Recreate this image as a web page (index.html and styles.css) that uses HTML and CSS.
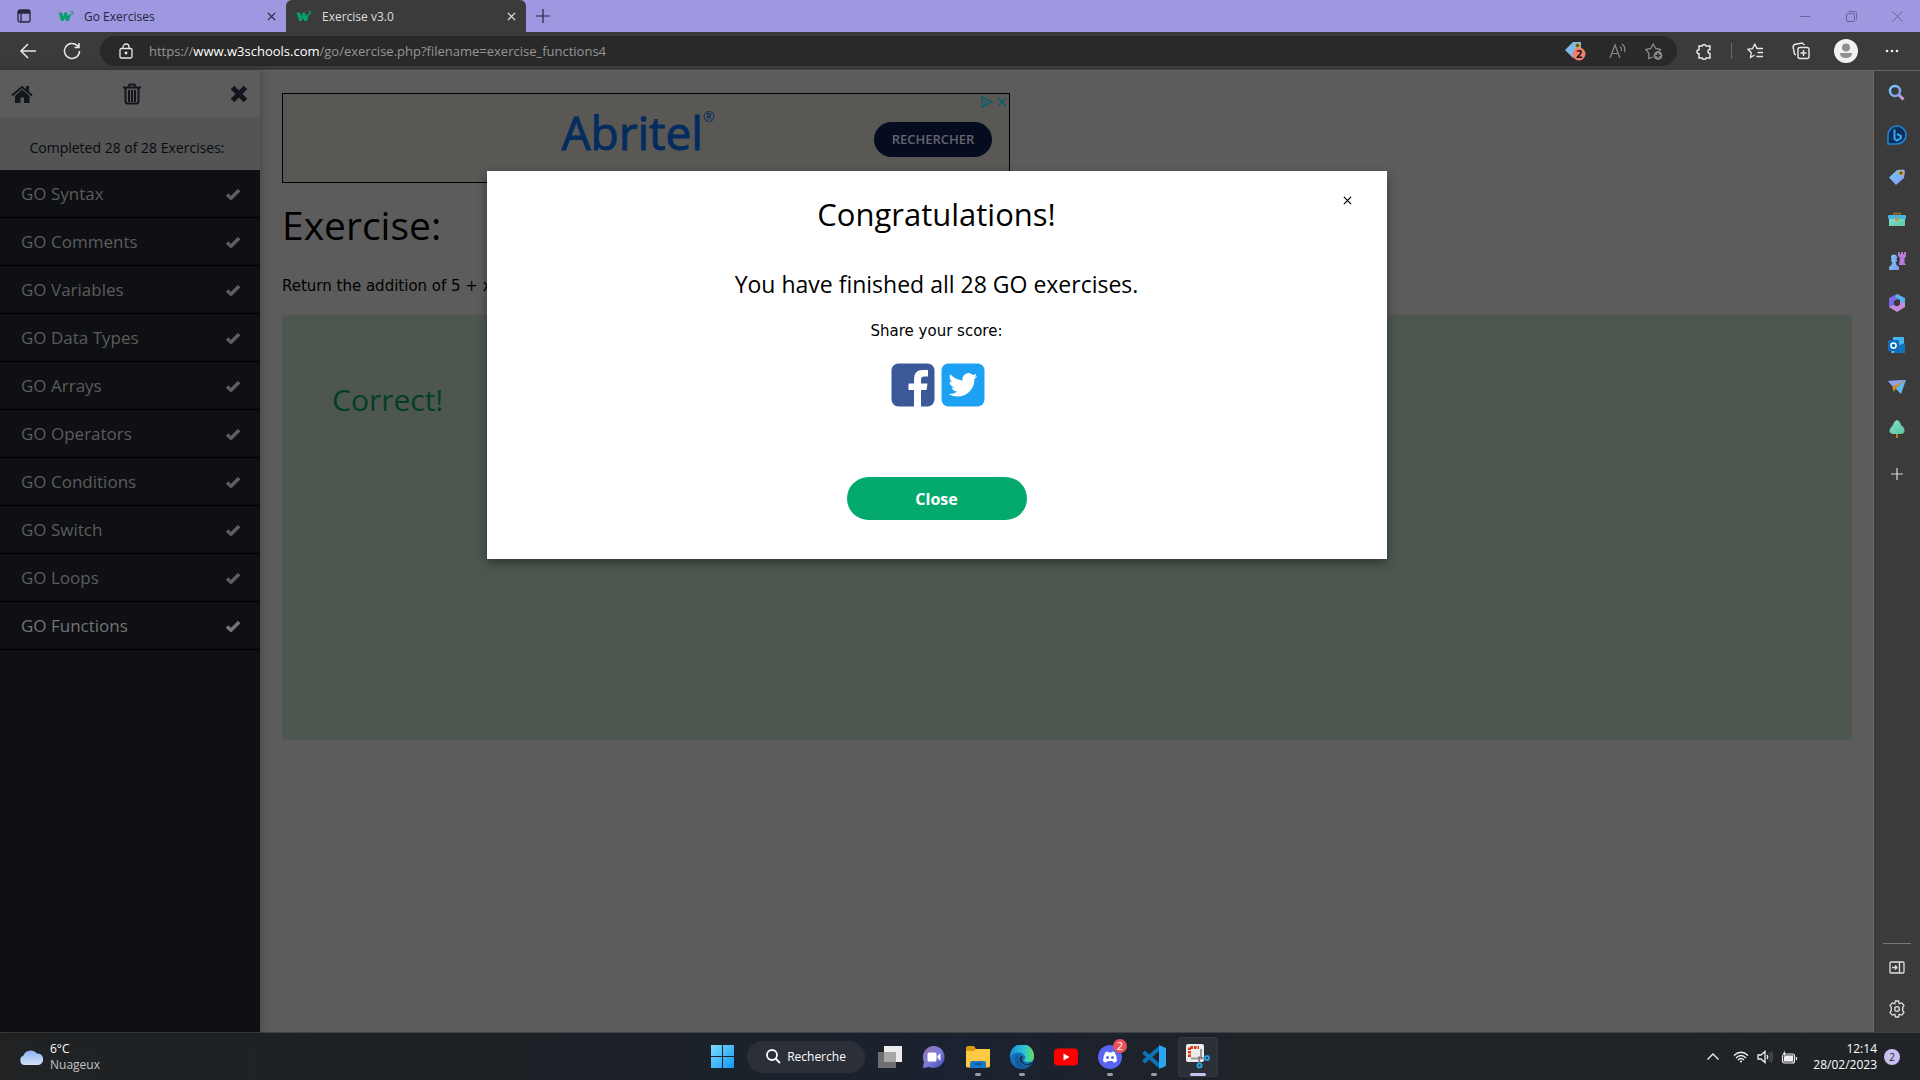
FILE: index.html
```html
<!DOCTYPE html>
<html lang="fr">
<head>
<meta charset="utf-8">
<title>Exercise v3.0</title>
<link rel="stylesheet" href="styles.css">
</head>
<body>
<svg class="defs" aria-hidden="true">
  <defs>
    <linearGradient id="g-blue" x1="0" y1="0" x2="1" y2="1"><stop offset="0" stop-color="#6fd0f7"/><stop offset="1" stop-color="#8a94f0"/></linearGradient>
    <linearGradient id="g-win" x1="0" y1="0" x2="1" y2="1"><stop offset="0" stop-color="#7fdcff"/><stop offset="1" stop-color="#1197f5"/></linearGradient>
    <linearGradient id="g-chat" x1="0" y1="0" x2="1" y2="1"><stop offset="0" stop-color="#9c6ba8"/><stop offset=".5" stop-color="#7a7fd8"/><stop offset="1" stop-color="#4b45b8"/></linearGradient>
    <linearGradient id="g-edge" x1="0" y1="0" x2="1" y2="0"><stop offset="0" stop-color="#1c8fd8"/><stop offset=".6" stop-color="#2cc3d4"/><stop offset="1" stop-color="#66e05a"/></linearGradient>
    <linearGradient id="g-green" x1="0" y1="0" x2="1" y2="1"><stop offset="0" stop-color="#7fe0d8"/><stop offset="1" stop-color="#5cc79a"/></linearGradient>
    <linearGradient id="g-cloud" x1="0" y1="0" x2="0" y2="1"><stop offset="0" stop-color="#8fb2f0"/><stop offset="1" stop-color="#d3e2fb"/></linearGradient>
    <symbol id="check" viewBox="0 0 16 12"><path d="M2 6.500 6 10.200 14.200 2" fill="none" stroke="currentColor" stroke-width="3.600"/></symbol>
    <symbol id="cross" viewBox="0 0 10 10"><path d="M1 1 9 9M9 1 1 9" fill="none" stroke="currentColor" stroke-width="1.400"/></symbol>
    <symbol id="w3" viewBox="0 0 16 16"><path d="M.5 4.500H4L5.200 8.500 6.500 4.500H9L10 8.500 10.800 6.500H13L10.800 13H8.200L7 10 5.500 13H3.200Z" fill="#07a06c"/><text x="12" y="7" class="w3-sup">3</text></symbol>
  </defs>
</svg>

<div class="screen">
  <header class="tabs">
    <button class="tab-menu" aria-label="Menu des onglets"><svg width="14" height="14" viewBox="0 0 14 14" fill="none" stroke="#26243a" stroke-width="1.300"><rect x="1" y="1" width="12" height="12" rx="2"/><path d="M1 4H13M4 4V13" /><path d="M1 2.500H13" stroke-width="2.500"/></svg></button>
    <div class="tab">
      <svg class="fav"><use href="#w3"/></svg><span class="tab-name">Go Exercises</span>
      <button class="tab-x" aria-label="Fermer Go Exercises"><svg width="9" height="9"><use href="#cross"/></svg></button>
    </div>
    <div class="tab tab-on">
      <svg class="fav"><use href="#w3"/></svg><span class="tab-name">Exercise v3.0</span>
      <button class="tab-x" aria-label="Fermer Exercise v3.0"><svg width="9" height="9"><use href="#cross"/></svg></button>
    </div>
    <button class="new-tab" aria-label="Nouvel onglet"><svg width="14" height="14" fill="none" stroke="#26243a" stroke-width="1.200"><path d="M7 0V14M0 7H14"/></svg></button>
    <div class="win-ctl">
      <button aria-label="Réduire"><svg width="10" height="10" fill="none" stroke="currentColor"><path d="M0 5.500H10"/></svg></button>
      <button aria-label="Restaurer"><svg width="11" height="11" fill="none" stroke="currentColor"><rect x=".5" y="2.500" width="8" height="8" rx="1.500"/><path d="M2.500.5H8.500A2 2 0 0 1 10.500 2.500V8.500"/></svg></button>
      <button aria-label="Fermer"><svg width="11" height="11" fill="none" stroke="currentColor"><path d="M.5.5 10.500 10.500M10.500.5.5 10.500"/></svg></button>
    </div>
  </header>

  <nav class="toolbar">
    <button class="tool" aria-label="Précédent"><svg width="18" height="16" fill="none" stroke="#e8e8e8" stroke-width="1.500"><path d="M17 8H2M9 1 2 8 9 15"/></svg></button>
    <button class="tool" aria-label="Actualiser"><svg width="18" height="18" fill="none" stroke="#e8e8e8" stroke-width="1.500"><path d="M16.500 9A7.500 7.500 0 1 1 14 3.400L16 5.200M16 1V5.500H11.500"/></svg></button>
    <div class="address">
      <svg width="14" height="16" fill="none" stroke="#e8e8e8" stroke-width="1.300"><rect x="1" y="5.500" width="12" height="9.500" rx="1.500"/><path d="M4 5.500V4A3 3 0 0 1 10 4V5.500"/><circle cx="7" cy="10" r=".8" fill="#e8e8e8"/></svg>
      <div class="url">https://<b>www.w3schools.com</b>/go/exercise.php?filename=exercise_functions4</div>
      <button class="tool in-tag" aria-label="Achats"><svg width="22" height="20"><path d="M1 9 9 1 17 1V10L9 17Z" fill="#7cb9ec"/><circle cx="13.500" cy="4.500" r="2" fill="#5b4a10" stroke="#d9a520"/><circle cx="15" cy="13" r="6.500" fill="#f08070"/><text x="12" y="17" class="tag-num">2</text></svg></button>
      <button class="tool in-read" aria-label="Lecture à voix haute"><svg width="18" height="16" fill="none" stroke="#8b8b8b" stroke-width="1.200"><path d="M1 15 6 2 11 15M3 10.500H9M11 3.500Q13 5 12.500 8M13 1Q17 4 15.500 9"/></svg></button>
      <button class="tool in-star" aria-label="Ajouter aux favoris"><svg width="18" height="17" fill="none" stroke="#8b8b8b" stroke-width="1.300"><path d="M8 14 3.500 15.500 4 10.500 .8 6.500 5.700 5.500 8.200 1.200 10.700 5.500 15.500 6.500 14 8.300"/><circle cx="13" cy="12.500" r="4.400" fill="#8b8b8b" stroke="none"/><path d="M13 10V15M10.500 12.500H15.500" stroke="#292929"/></svg></button>
    </div>
    <button class="tool ext" aria-label="Extensions"><svg width="17" height="17" fill="none" stroke="#e8e8e8" stroke-width="1.500"><path d="M3 3H6.200A2 2 0 0 1 10 3H14V6.500A2 2 0 0 0 14 10.500V15H10A2 2 0 0 1 6.200 15H3V10.800A2 2 0 0 1 3 6.800Z"/></svg></button>
    <span class="split"></span>
    <button class="tool fav-btn" aria-label="Favoris"><svg width="18" height="16" fill="none" stroke="#e8e8e8" stroke-width="1.300"><path d="M7.500 12 3.500 14.500 4.300 9.800 1 6.300 5.500 5.600 7.800 1.200 10 5.500H16M10.500 9.500H16M9.500 13.500H16"/></svg></button>
    <button class="tool coll" aria-label="Collections"><svg width="18" height="18" fill="none" stroke="#e8e8e8" stroke-width="1.400"><rect x="6" y="5.500" width="11" height="11" rx="2"/><path d="M11.500 8V14M8.500 11H14.500M4 13 2.500 12 1 4.500 2.500 2.500 10 1 12.500 3"/></svg></button>
    <button class="tool user" aria-label="Profil"><svg width="24" height="24"><circle cx="12" cy="12" r="12" fill="#f2f2f2"/><circle cx="12" cy="8.500" r="4" fill="#8f8f8f"/><path d="M6 14H18Q18 19 12 19T6 14Z" fill="#8f8f8f"/></svg></button>
    <button class="tool" aria-label="Paramètres et plus"><svg width="14" height="4" fill="#f0f0f0"><circle cx="2" cy="2" r="1.300"/><circle cx="7" cy="2" r="1.300"/><circle cx="12" cy="2" r="1.300"/></svg></button>
  </nav>

  <div class="body">
    <div class="page">
      <aside class="menu">
        <div class="menu-top">
          <button aria-label="Accueil"><svg width="22" height="19" fill="#14161d"><path d="M11 4.500 18.500 11V18H13V12.500H9.500V18H4V11Z"/><path d="M1 10.500 11 2 21 10.500" fill="none" stroke="#14161d" stroke-width="2"/><path d="M15 1H18V7L15 4.500Z"/></svg></button>
          <button aria-label="Supprimer"><svg width="20" height="22" fill="none" stroke="#14161d" stroke-width="2"><path d="M1 4.500H19M6.500 4 7.500 1.500H12.500L13.500 4M3.500 5V19A2 2 0 0 0 5.500 20.500H14.500A2 2 0 0 0 16.500 19V5M7 7V19M10 7V19M13 7V19"/></svg></button>
          <button aria-label="Fermer le menu"><svg width="18" height="18" fill="none" stroke="#14161d" stroke-width="5"><path d="M2.500 2.500 15.500 15.500M15.500 2.500 2.500 15.500"/></svg></button>
        </div>
        <div class="done">Completed 28 of 28 Exercises:</div>
        <a class="item" href="#">GO Syntax<svg><use href="#check"/></svg></a>
        <a class="item" href="#">GO Comments<svg><use href="#check"/></svg></a>
        <a class="item" href="#">GO Variables<svg><use href="#check"/></svg></a>
        <a class="item" href="#">GO Data Types<svg><use href="#check"/></svg></a>
        <a class="item" href="#">GO Arrays<svg><use href="#check"/></svg></a>
        <a class="item" href="#">GO Operators<svg><use href="#check"/></svg></a>
        <a class="item" href="#">GO Conditions<svg><use href="#check"/></svg></a>
        <a class="item" href="#">GO Switch<svg><use href="#check"/></svg></a>
        <a class="item" href="#">GO Loops<svg><use href="#check"/></svg></a>
        <a class="item item-on" href="#">GO Functions<svg><use href="#check"/></svg></a>
      </aside>
      <main class="main">
        <div class="ad">
          <div class="brand">Abritel<sup>®</sup></div>
          <button class="search-ad">RECHERCHER</button>
          <div class="ad-marks"><svg width="12" height="12" fill="none" stroke="#07606b" stroke-width="1.400"><path d="M1 1 11 6 1 11ZM4.500 5V9"/></svg><svg width="10" height="10" color="#07606b"><use href="#cross"/></svg></div>
        </div>
        <h1>Exercise:</h1>
        <p class="task">Return the addition of 5 + x</p>
        <div class="result"><h2>Correct!</h2></div>
      </main>
      <section class="modal" role="dialog" aria-label="Congratulations!">
        <button class="modal-x" aria-label="Fermer la fenêtre"><svg width="9" height="9"><use href="#cross"/></svg></button>
        <h2>Congratulations!</h2>
        <h3>You have finished all 28 GO exercises.</h3>
        <p>Share your score:</p>
        <div class="share">
          <a href="#" aria-label="Facebook"><svg width="44" height="44"><rect x=".5" y=".5" width="43" height="43" rx="7" fill="#3b5998"/><path d="M23 44V27H17.500V20.500H23V16Q23 7 31.500 7H37V13.500H33Q30 13.500 30 16.500V20.500H36.500L35.500 27H30V44Z" fill="#fff"/></svg></a>
          <a href="#" aria-label="Twitter"><svg width="44" height="44"><rect x=".5" y=".5" width="43" height="43" rx="7" fill="#1da1f2"/><path transform="translate(7.500 7.500) scale(1.200)" d="M23.950 4.570a10 10 0 0 1-2.820.770 4.960 4.960 0 0 0 2.160-2.720c-.95.550-2 .950-3.130 1.180a4.920 4.920 0 0 0-8.380 4.480C7.690 8.090 4.070 6.130 1.640 3.160a4.820 4.820 0 0 0-.67 2.480c0 1.710.870 3.210 2.190 4.100a4.900 4.900 0 0 1-2.230-.62v.06a4.920 4.920 0 0 0 3.950 4.830 5 5 0 0 1-2.210.080 4.940 4.940 0 0 0 4.600 3.420A9.870 9.870 0 0 1 0 19.540a13.990 13.990 0 0 0 7.560 2.210c9.050 0 14-7.500 14-13.980 0-.21 0-.42-.02-.63a9.940 9.940 0 0 0 2.410-2.570z" fill="#fff"/></svg></a>
        </div>
        <button class="close">Close</button>
      </section>
    </div>
    <aside class="side">
      <button aria-label="Rechercher"><svg width="18" height="18" fill="none"><circle cx="7" cy="7" r="5" stroke="url(#g-blue)" stroke-width="2.500"/><path d="M11 11 15.500 15.500" stroke="#c79ae0" stroke-width="3"/></svg></button>
      <button aria-label="Bing"><svg width="20" height="20"><path d="M10 1A9 9 0 1 1 10 19H1V10A9 9 0 0 1 10 1Z" fill="#0b2f57" stroke="#1f86dc" stroke-width="1.500"/><path d="M7.500 4.500V14L10 15.500 14 13V11L10 9" fill="none" stroke="#35a8f5" stroke-width="2"/></svg></button>
      <button aria-label="Achats"><svg width="18" height="18"><path d="M1 9.500 9 2 15.500 1.500 17 3 16 10 8 17Z" fill="url(#g-blue)"/><circle cx="13" cy="5" r="1.800" fill="#3b3b3b" stroke="#e09a12" stroke-width="1.300"/></svg></button>
      <button aria-label="Outils"><svg width="18" height="14"><path d="M6 4V1.500H12V4" fill="none" stroke="#a4741a" stroke-width="1.500"/><rect y="3" width="18" height="4" rx="1" fill="#48b6dc"/><rect x="1" y="7" width="16" height="7" fill="url(#g-green)"/><circle cx="9" cy="7.500" r="1.800" fill="#d19a1a"/></svg></button>
      <button aria-label="Jeux"><svg width="18" height="18"><path d="M10 0H11.800V2H13V0H15V2H16.200V0H18V5L16.500 6V11L18 13H11L12 6 10 4Z" fill="#b57bdc"/><circle cx="6" cy="5.500" r="3" fill="url(#g-blue)"/><path d="M3 8H9V9.500H7.500L8.500 13 11 15V18H1V15L3.500 13 4.500 9.500H3Z" fill="url(#g-blue)"/></svg></button>
      <button aria-label="Microsoft 365"><svg width="18" height="18"><path d="M9 0 1 4V13L6 15V7L11 4.500V1Z" fill="#7a6ae0"/><path d="M9 0 17 4V11L12 9V6L7 3Z" fill="#55b3f0"/><path d="M17 9V13L9 18 1 13 6 11 9 12.500 12 10.500V8Z" fill="#c58ae0"/></svg></button>
      <button aria-label="Outlook"><svg width="18" height="16"><path d="M5 0H16V16H3V4H5Z" fill="#42b4ee"/><path d="M9 9 17 6V16H6Z" fill="#1672b8"/><rect y="3" width="11" height="11" rx="1" fill="#0f6cbd"/><circle cx="5.500" cy="8.500" r="2.600" fill="none" stroke="#fff" stroke-width="1.500"/></svg></button>
      <button aria-label="Drop"><svg width="18" height="14"><path d="M0 1 18 0 13 14 8 9Z" fill="#62b7f2"/><path d="M0 1 18 0 5 7Z" fill="#8fa0f0"/><path d="M18 0 4 7 6 12 8 8Z" fill="#c98c1c"/></svg></button>
      <button aria-label="Arbre"><svg width="16" height="18"><rect x="7" y="11" width="2" height="7" fill="#b87a1c"/><path d="M8 0Q11 1 12 5 16 8 15.500 11T12 14H4Q0 13 .5 10.500T4 5Q5 1 8 0Z" fill="url(#g-green)"/></svg></button>
      <button class="side-add" aria-label="Personnaliser"><svg width="12" height="12" fill="none" stroke="#d8d8d8" stroke-width="1.200"><path d="M6 0V12M0 6H12"/></svg></button>
      <span class="side-line"></span>
      <button aria-label="Masquer la barre"><svg width="16" height="13" fill="none" stroke="#e0e0e0" stroke-width="1.300"><rect x="1" y="1" width="14" height="11" rx="1"/><path d="M10.500 1V12M3 6.500H8M6 4.500 8 6.500 6 8.500"/></svg></button>
      <button aria-label="Paramètres"><svg width="18" height="18" fill="none" stroke="#e0e0e0" stroke-width="1.300"><path d="M7.500 1H10.500L11.200 3.600 13.800 2.900 16 5.500 14.700 7.500V10.500L16 12.500 13.800 15.100 11.200 14.400 10.500 17H7.500L6.800 14.400 4.200 15.100 2 12.500 3.300 10.500V7.500L2 5.500 4.200 2.900 6.800 3.600Z"/><circle cx="9" cy="9" r="2.300"/></svg></button>
    </aside>
  </div>

  <footer class="taskbar">
    <div class="weather">
      <svg width="24" height="16"><path d="M5 16A5 5 0 0 1 4.500 6.500 7.500 6.500 0 0 1 18 4.500 5.500 5.500 0 0 1 19 16Z" fill="url(#g-cloud)"/></svg>
      <div><div>6°C</div><div class="sky">Nuageux</div></div>
    </div>
    <div class="apps">
      <button class="app" aria-label="Démarrer"><svg width="23" height="23" fill="url(#g-win)"><path d="M0 0H11V11H0ZM12 0H23V11H12ZM0 12H11V23H0ZM12 12H23V23H12Z"/></svg></button>
      <button class="find"><svg width="15" height="15" fill="none" stroke="#fff" stroke-width="1.800"><circle cx="6" cy="6" r="5"/><path d="M9.500 9.500 14 14"/></svg>Recherche</button>
      <button class="app" aria-label="Vue des tâches"><svg width="24" height="22"><rect x="6" width="18" height="16" fill="#ececec"/><rect y="6" width="18" height="16" fill="#6f6f6f"/><rect x="6" y="6" width="12" height="10" fill="#a8a8a8"/></svg></button>
      <button class="app" aria-label="Conversation"><svg width="24" height="24"><path d="M12 1A11 11 0 1 1 7 22L1 23 2 17A11 11 0 0 1 12 1Z" fill="url(#g-chat)"/><rect x="5.500" y="7.500" width="9" height="9" rx="1.500" fill="#fff"/><path d="M15.500 11 18.500 8V16L15.500 13Z" fill="#fff"/></svg></button>
      <button class="app run" aria-label="Explorateur"><svg width="24" height="22"><path d="M0 2Q0 0 2 0H8L10 3V8H0Z" fill="#d89b10"/><path d="M0 5H8L10 3H24V20Q24 21.500 22 21.500H2Q0 21.500 0 20Z" fill="#fdca44"/><path d="M4 22V17Q4 15 6 15H18Q20 15 20 17V22Z" fill="#1877c9"/><path d="M8 18H16" stroke="#0d5295" stroke-width="1.500"/></svg></button>
      <button class="app run" aria-label="Edge"><svg width="24" height="24"><circle cx="12" cy="12" r="12" fill="#1170b8"/><path d="M0 11A12 12 0 0 1 24 11Q24 17 18 17 14 17 14 15 16 13 14.500 10.500 12 7 7 7.500 2 8 0 13Z" fill="url(#g-edge)"/><path d="M9 10Q7 14 10 18T21 19.500Q18 24 12 24 5 22 5 16T9 10Z" fill="#135aa0"/><path d="M13 12Q10 14 13 17.500T23 17L21 19.500Q14 21 11 17.500T11 11Z" fill="#1b2430"/></svg></button>
      <button class="app" aria-label="YouTube"><svg width="24" height="18"><rect y=".5" width="24" height="17" rx="4" fill="#f00"/><path d="M9.500 5.500 15.500 9 9.500 12.500Z" fill="#fff"/></svg></button>
      <button class="app run" aria-label="Discord"><svg width="24" height="24"><circle cx="12" cy="12" r="12" fill="#5865f2"/><path d="M7.500 7 10 6.500 10.500 7.500H13.500L14 6.500 16.500 7Q19 11 19 16 17.500 17.500 15.500 17.500L14.500 16H9.500L8.500 17.500Q6.500 17.500 5 16 5 11 7.500 7Z" fill="#fff"/><circle cx="9.500" cy="12.500" r="1.500" fill="#5865f2"/><circle cx="14.500" cy="12.500" r="1.500" fill="#5865f2"/></svg><span class="badge">2</span></button>
      <button class="app run" aria-label="Visual Studio Code"><svg width="24" height="24" fill="none"><path d="M17.500 3 1.500 17M17.500 21 1.500 7" stroke="#0f72b8" stroke-width="4"/><path d="M17 0 24 3V21L17 24Z" fill="#2aa6f2"/></svg></button>
      <button class="app run on" aria-label="Outil Capture"><svg width="24" height="25"><rect width="18" height="18" rx="2" fill="#ececec"/><path d="M3.500 13V3.500H13" fill="none" stroke="#d83b12" stroke-width="3" stroke-dasharray="2.500 1"/><path d="M5 14.500H15V5" fill="none" stroke="#9a9a9a" stroke-width="2"/><path d="M12 13 19 14.500M13 13 13.500 19" stroke="#777" stroke-width="1.500"/><g fill="none" stroke="#2b9be0" stroke-width="2"><circle cx="21" cy="14" r="2"/><circle cx="13.500" cy="21.500" r="2"/></g></svg></button>
    </div>
    <div class="tray">
      <svg width="12" height="7" fill="none" stroke="#f0f0f0" stroke-width="1.300"><path d="M.5 6.500 6 1 11.500 6.500"/></svg>
      <svg class="wifi" width="16" height="12" fill="none" stroke="#f0f0f0" stroke-width="1.300"><path d="M1 4.500Q8-2 15 4.500M3 7Q8 2 13 7M5 9Q8 6 11 9"/><circle cx="8" cy="10.500" r="1" fill="#f0f0f0" stroke="none"/></svg>
      <svg class="vol" width="16" height="14" fill="none" stroke="#f0f0f0" stroke-width="1.300"><path d="M1 5H4L8 1.500V12.500L4 9H1ZM10 5Q11.500 7 10 9"/><path d="M12 3Q14.500 7 12 11M14 1.500Q17 7 14 12.500" stroke="#555"/></svg>
      <svg class="bat" width="17" height="14" fill="none" stroke="#f0f0f0" stroke-width="1.200"><rect x="1.500" y="4" width="12" height="9" rx="2"/><rect x="3.500" y="6" width="8" height="5" fill="#f0f0f0"/><path d="M15.500 7V10"/><path d="M4 0 1 5H3L2 8 6 3H4Z" fill="#f0f0f0" stroke="#202427" stroke-width=".5"/></svg>
      <div class="clock"><div>12:14</div><div>28/02/2023</div></div>
      <span class="count">2</span>
    </div>
  </footer>
</div>
</body>
</html>
```
FILE: styles.css
```css
* { box-sizing: border-box; }
body { margin: 0; font-family: "Open Sans", "Noto Sans", sans-serif; color: #000; }
button { border: 0; padding: 0; background: none; font: inherit; color: inherit; display: flex; align-items: center; justify-content: center; }
a { color: inherit; text-decoration: none; }
h1, h2, h3, p { margin: 0; font-weight: 400; }
svg { display: block; flex: none; }
.defs { position: absolute; width: 0; height: 0; }
.screen { min-height: 100vh; display: flex; flex-direction: column; overflow: hidden; }

/* tab strip */
.tabs { height: 32px; display: flex; background: #9d98e0; color: #26243a; font-size: 12px; }
.tab-menu { width: 48px; }
.tab { width: 238px; display: flex; align-items: center; padding: 0 10px; }
.tab-on { width: 240px; background: #3b3b3b; color: #dedede; border-radius: 6px 6px 0 0; }
.fav { width: 16px; height: 16px; }
.w3-sup { font: 700 6px "Open Sans", sans-serif; fill: #07a06c; }
.tab-name { flex: 1; padding-left: 10px; }
.new-tab { width: 34px; }
.win-ctl { margin-left: auto; display: flex; color: #67639a; }
.win-ctl button { width: 46px; }

/* address bar */
.toolbar { height: 39px; display: flex; align-items: center; background: #3b3b3b; border-bottom: 1px solid #666; padding-left: 6px; padding-right: 6px; }
.tool { width: 44px; height: 30px; }
.address { flex: 1; height: 30px; margin-left: 6px; padding-left: 19px; border-radius: 15px; background: #292929; display: flex; align-items: center; }
.url { flex: 1; padding-left: 16px; font-size: 13px; color: #969696; }
.url b { font-weight: 400; color: #fff; }
.in-tag { width: 50px; }
.in-star { width: 36px; margin-right: 5px; }
.in-read { width: 36px; }
.tag-num { font: 700 11px "Open Sans", sans-serif; fill: #241010; }
.ext { width: 54px; }
.split { width: 1px; height: 16px; background: #6a6a6a; }
.fav-btn { width: 48px; }
.coll { width: 42px; }
.user { width: 48px; }

/* window body */
.body { flex: 1; display: flex; background: #3b3b3b; }
.page { flex: 1; display: flex; position: relative; background: #5c5c5c; border-right: 1px solid #6a6a6a; }
.menu { width: 260px; background: #0e1014; color: #5c5c5c; box-shadow: 0 0 10px rgba(0, 0, 0, .3); }
.menu-top { height: 47px; background: #5c5c5c; display: flex; justify-content: space-between; align-items: center; padding: 0 12px 1px 11px; }
.done { height: 52px; padding-top: 20px; text-align: center; font-size: 14px; line-height: 20px; background: #525456; color: #0a0a0a; padding-right: 6px; }
.item { height: 48px; display: flex; align-items: center; justify-content: space-between; padding: 0 19px 0 21px; border-bottom: 1px solid #000; font-size: 17px; }
.item svg { width: 16px; height: 12px; }
.item-on { color: #747474; }

.main { flex: 1; padding: 22px 21px 0 22px; }
.ad { width: 728px; height: 90px; border: 1px solid #000; background: #5a5855; position: relative; display: grid; grid-template-columns: 1fr auto 1fr; align-items: center; }
.brand { grid-column: 2; font-size: 46px; line-height: 60px; color: #042c5e; -webkit-text-stroke: 1px #042c5e; padding-bottom: 12px; margin-right: 16px; display: flex; }
.brand sup { font-size: 14px; line-height: 30px; -webkit-text-stroke: 0; }
.search-ad { justify-self: end; margin-top: 2px; margin-right: 17px; width: 118px; height: 35px; border-radius: 18px; background: #060c20; color: #62656d; font-size: 13px; font-weight: 600; }
.ad-marks { position: absolute; top: 2px; right: 2px; display: flex; align-items: center; gap: 4px; }
h1 { font-size: 39px; line-height: 60px; margin-top: 12px; }
.task { font: 15px/22px "DejaVu Sans", sans-serif; margin-top: 20px; }
.result { height: 425px; margin-top: 18px; padding: 60px 50px; border-radius: 4px; background: #4d5750; color: #053e28; }
.result h2 { font-size: 30px; line-height: 50px; }

/* dialog */
.modal { position: absolute; top: 100px; left: 0; right: 0; margin: 0 auto; max-width: 900px; background: #fff; padding: 19px 0 39px; display: flex; flex-direction: column; align-items: center; box-shadow: 0 4px 10px rgba(0, 0, 0, .4); }
.modal h2 { font-size: 31px; line-height: 48px; }
.modal h3 { font-size: 23px; line-height: 36px; margin-top: 28px; }
.modal p { font: 15px/22px "DejaVu Sans", sans-serif; margin-top: 18px; }
.modal-x { position: absolute; top: 20px; right: 30px; width: 18px; height: 18px; }
.share { display: flex; gap: 6px; margin-top: 21px; padding-left: 2px; }
.close { width: 180px; height: 43px; margin-top: 70px; border-radius: 22px; background: #04aa6d; color: #fff; font-size: 16px; font-weight: 700; }

/* browser sidebar */
.side { width: 46px; display: flex; flex-direction: column; align-items: center; padding: 1px 0 2px; }
.side button { width: 44px; height: 42px; }
.side .side-add { height: 48px; }
.side-line { width: 28px; height: 1px; background: #777; margin-top: auto; margin-bottom: 2px; }

/* task bar */
.taskbar { height: 48px; border-top: 1px solid #3f4142; background: linear-gradient(90deg, #202224, #1c2228 35%, #1b2230 50%, #1f2227 65%, #202427); color: #fff; display: grid; grid-template-columns: 1fr auto 1fr; font-size: 12px; line-height: 16px; }
.weather { display: flex; align-items: center; gap: 7px; padding-left: 19px; }
.sky { color: #c4c4c4; }
.apps { display: flex; align-items: center; gap: 4px; }
.app { width: 40px; height: 40px; border-radius: 4px; position: relative; }
.run::after { content: ""; position: absolute; bottom: 1px; left: 17px; width: 6px; height: 3px; border-radius: 2px; background: #9a9c9e; }
.on { background: #2b3036; box-shadow: inset 0 0 0 1px #34393e; }
.on::after { left: 12px; width: 16px; background: #c8c0f0; }
.find { width: 118px; height: 32px; margin: 0 1px; border-radius: 16px; background: #2b3038; gap: 6px; }
.badge { position: absolute; top: 2px; right: 3px; width: 14px; height: 14px; border-radius: 7px; background: #e8505a; font-size: 11px; line-height: 14px; text-align: center; }
.tray { display: flex; align-items: center; justify-content: flex-end; padding-right: 20px; }
.wifi { margin-left: 14px; }
.vol { margin-left: 8px; }
.bat { margin-left: 8px; }
.clock { text-align: right; margin-left: 15px; }
.count { width: 16px; height: 16px; margin-left: 7px; border-radius: 8px; background: #c8c0f0; color: #222; text-align: center; font-size: 10px; }
```
